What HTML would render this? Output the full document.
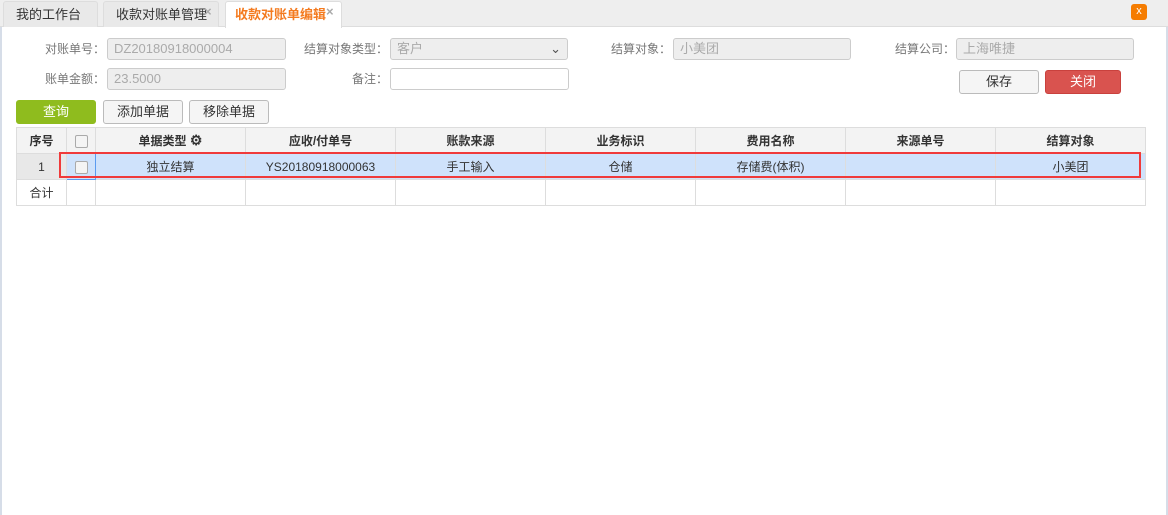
<!DOCTYPE html>
<html><head><meta charset="utf-8"><style>
*{box-sizing:border-box;margin:0;padding:0}
body{width:1168px;height:515px;background:#fff;font-family:"Liberation Sans","Noto Sans CJK SC",sans-serif;font-size:12px;color:#333;position:relative;overflow:hidden}
.a{position:absolute}
.bar{left:0;top:0;width:1168px;height:27px;background:#eeeeee;border-bottom:1px solid #ddd}
.tab{top:1px;height:26px;background:#e9e9e9;border:1px solid #ddd;border-bottom:none;border-radius:3px 3px 0 0;font-size:13px;line-height:26px;padding-left:12px}
.x{position:absolute;font-size:13px;color:#aaa;font-weight:bold;line-height:13px}
.lbl{font-size:12px;color:#777;text-align:right}
.in{height:22px;border:1px solid #ccc;border-radius:3px;background:#eee;color:#aaa;font-size:13px;line-height:20px;padding-left:6px}
.btn{height:24px;border:1px solid #bbb;border-radius:3px;background:#f5f5f5;text-align:center;line-height:22px;font-size:13px}
table{position:absolute;left:16px;top:127px;border-collapse:collapse;table-layout:fixed}
td{border:1px solid #ddd;height:26px;text-align:center;font-size:12px}
tr.h td{background:#f3f3f3;font-weight:bold;height:26px}
tr.s td{background:#cfe2fb}
.cb{display:inline-block;width:13px;height:13px;border:1px solid #aaa;border-radius:2px;background:#f4f4f4;vertical-align:middle}
</style></head><body>
<div class="a bar"></div>
<div class="a" style="left:0;top:27px;width:2px;height:488px;background:#d6dde8"></div>
<div class="a" style="right:0;top:27px;width:2px;height:488px;background:#d6dde8"></div>
<div class="a tab" style="left:3px;width:95px">我的工作台</div>
<div class="a tab" style="left:103px;width:116px">收款对账单管理</div>
<div class="a x" style="left:204px;top:5px">×</div>
<div class="a tab" style="left:225px;width:117px;background:#fff;color:#f47b20;font-weight:bold;height:27px;padding-left:9px">收款对账单编辑</div>
<div class="a x" style="left:326px;top:5px">×</div>
<div class="a" style="left:1131px;top:4px;width:16px;height:16px;background:#f57c00;border-radius:3px;color:#fff;text-align:center;line-height:15px;font-size:11px">x</div>

<div class="a lbl" style="left:20px;top:40px;width:85px">对账单号：</div>
<div class="a in" style="left:107px;top:38px;width:179px">DZ20180918000004</div>
<div class="a lbl" style="left:20px;top:70px;width:85px">账单金额：</div>
<div class="a in" style="left:107px;top:68px;width:179px">23.5000</div>
<div class="a lbl" style="left:288px;top:40px;width:100px">结算对象类型：</div>
<div class="a in" style="left:390px;top:38px;width:178px;background:#eee">客户<span style="position:absolute;right:6px;top:0;color:#555">&#8964;</span></div>
<div class="a lbl" style="left:288px;top:70px;width:100px">备注：</div>
<div class="a in" style="left:390px;top:68px;width:179px;background:#fff"></div>
<div class="a lbl" style="left:570px;top:40px;width:101px">结算对象：</div>
<div class="a in" style="left:673px;top:38px;width:178px">小美团</div>
<div class="a lbl" style="left:858px;top:40px;width:97px">结算公司：</div>
<div class="a in" style="left:956px;top:38px;width:178px">上海唯捷</div>
<div class="a btn" style="left:959px;top:70px;width:80px">保存</div>
<div class="a btn" style="left:1045px;top:70px;width:76px;background:#d9534f;border-color:#c9413d;color:#fff">关闭</div>

<div class="a btn" style="left:16px;top:100px;width:80px;background:#8fbc1e;border-color:#8fbc1e;color:#fff">查询</div>
<div class="a btn" style="left:103px;top:100px;width:80px">添加单据</div>
<div class="a btn" style="left:189px;top:100px;width:80px">移除单据</div>

<table>
<colgroup><col style="width:50px"><col style="width:29px"><col style="width:150px"><col style="width:150px"><col style="width:150px"><col style="width:150px"><col style="width:150px"><col style="width:150px"><col style="width:150px"></colgroup>
<tr class="h"><td>序号</td><td><span class="cb"></span></td><td>单据类型 <span style="font-size:14px">⚙</span></td><td>应收/付单号</td><td>账款来源</td><td>业务标识</td><td>费用名称</td><td>来源单号</td><td>结算对象</td></tr>
<tr class="s"><td style="background:#e8e8e8">1</td><td style="border:1px solid #5b9bf0"><span class="cb"></span></td><td>独立结算</td><td>YS20180918000063</td><td>手工输入</td><td>仓储</td><td>存储费(体积)</td><td></td><td>小美团</td></tr>
<tr><td>合计</td><td></td><td></td><td></td><td></td><td></td><td></td><td></td><td></td></tr>
</table>
<div class="a" style="left:59px;top:152px;width:1082px;height:26px;border:2px solid #f03a3a"></div>
</body></html>
